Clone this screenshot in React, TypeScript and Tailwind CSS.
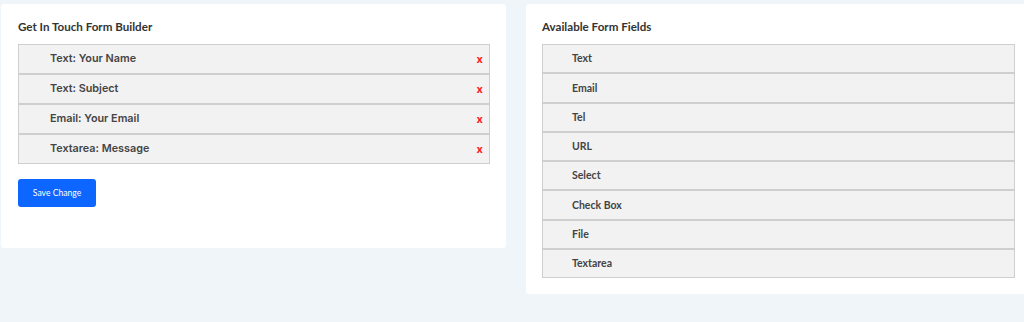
import React from "react";

const builder = ["Text: Your Name", "Text: Subject", "Email: Your Email", "Textarea: Message"];
const fields = ["Text", "Email", "Tel", "URL", "Select", "Check Box", "File", "Textarea"];

export default function App() {
  return (
    <div className="w-[1024px] h-[322px] overflow-hidden bg-[#f0f5f9] pt-[4px] pl-[1px] flex gap-[20px] items-start" style={{ fontFamily: "Lato, sans-serif" }}>
      <div className="w-[505px] shrink-0 bg-white rounded-[3px] pl-[17px] pr-[16px] pt-[15px] pb-[41px]">
        <h2 className="text-[11.6px] font-bold text-[#333] leading-[16px] mb-[9px]">Get In Touch Form Builder</h2>
        <div className="flex flex-col">
          {builder.map((b) => (
            <div key={b} className="h-[30px] bg-[#f2f2f2] border border-[#cfcfcf] flex items-center justify-between pl-[31px] pr-[6px] pt-[1px]">
              <span className="text-[10.8px] font-semibold text-[#444]" style={{ fontFamily: "Inter, sans-serif" }}>{b}</span>
              <span className="text-[11px] font-bold text-[#ff1a1a] leading-none" style={{ fontFamily: "Inter, sans-serif" }}>x</span>
            </div>
          ))}
        </div>
        <button className="mt-[15px] w-[78px] h-[28px] bg-[#0d66ff] rounded-[3px] text-white text-[8.6px] flex items-center justify-center">Save Change</button>
      </div>
      <div className="w-[505px] shrink-0 bg-white rounded-[3px] pl-[16px] pr-[16px] pt-[15px] pb-[16px]">
        <h2 className="text-[11.6px] font-bold text-[#333] leading-[16px] mb-[9px]">Available Form Fields</h2>
        <div className="flex flex-col">
          {fields.map((f) => (
            <div key={f} className="h-[29.25px] bg-[#f2f2f2] border border-[#cfcfcf] flex items-center pl-[29px] pt-[1px]">
              <span className="text-[10.5px] font-bold text-[#444]">{f}</span>
            </div>
          ))}
        </div>
      </div>
    </div>
  );
}
